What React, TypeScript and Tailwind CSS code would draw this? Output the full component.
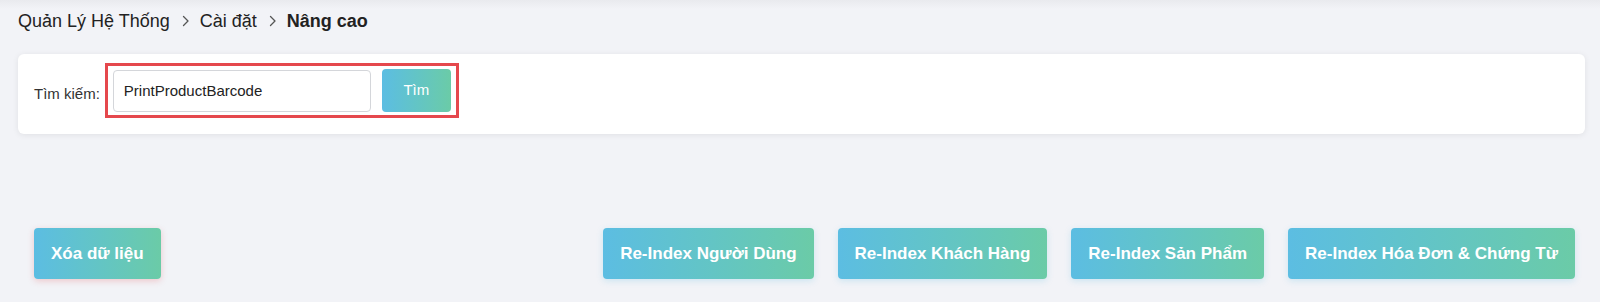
const ChevronIcon = () => (
  <svg width="8" height="12" viewBox="0 0 8 12" fill="none" className="ml-[12px] mr-[10px]">
    <path d="M1.5 1.5L6 6L1.5 10.5" stroke="#555" strokeWidth="1.3" strokeLinecap="round" strokeLinejoin="round" />
  </svg>
)

const GradientButton = ({ label, shadow }: { label: string; shadow: string }) => (
  <button
    className={`h-[51px] px-[17px] rounded-[4px] bg-gradient-to-r from-[#5cbde2] to-[#6bcba7] text-white font-bold text-[17px] ${shadow}`}
  >
    {label}
  </button>
)

export default function App() {
  return (
    <div
      className="w-[1600px] h-[302px] bg-[#f2f3f7] overflow-hidden"
      style={{ fontFamily: '"Liberation Sans", Arial, sans-serif' }}
    >
      <div className="bg-gradient-to-b from-[#e9eaee] to-[#f2f3f7] h-[9px]" />
      <div className="px-[18px]">
        {/* breadcrumb */}
        <div className="h-[24px] flex items-center text-[18px] text-[#222]">
          <span>Quản Lý Hệ Thống</span>
          <ChevronIcon />
          <span>Cài đặt</span>
          <ChevronIcon />
          <span className="font-bold">Nâng cao</span>
        </div>

        {/* search card */}
        <div className="mt-[21px] h-[80px] w-[1567px] bg-white rounded-[6px] shadow-[0_1px_6px_rgba(0,0,0,0.08)] flex items-center px-[16px]">
          <span className="text-[15px] text-[#333]">Tìm kiếm:</span>
          <div className="ml-[5px] mb-[7px] h-[55px] border-[3px] border-[#e5484d] flex items-center gap-[11px] px-[5px]">
            <input
              className="h-[42px] w-[258px] border border-[#d4d6da] rounded-[4px] px-[10px] text-[15px] text-[#222] outline-none"
              defaultValue="PrintProductBarcode"
              style={{ fontFamily: '"Liberation Sans", Arial, sans-serif' }}
            />
            <button className="h-[43px] w-[69px] rounded-[4px] bg-gradient-to-r from-[#5cbde2] to-[#6bcba7] text-white text-[15px]">
              Tìm
            </button>
          </div>
        </div>

        {/* actions */}
        <div className="mt-[94px] flex justify-between pl-[16px] pr-[7px]">
          <GradientButton label="Xóa dữ liệu" shadow="shadow-[0_2px_6px_rgba(229,72,77,0.25)]" />
          <div className="flex gap-[24px]">
            <GradientButton label="Re-Index Người Dùng" shadow="shadow-[0_2px_6px_rgba(92,189,226,0.25)]" />
            <GradientButton label="Re-Index Khách Hàng" shadow="shadow-[0_2px_6px_rgba(92,189,226,0.25)]" />
            <GradientButton label="Re-Index Sản Phẩm" shadow="shadow-[0_2px_6px_rgba(92,189,226,0.25)]" />
            <GradientButton label="Re-Index Hóa Đơn & Chứng Từ" shadow="shadow-[0_2px_6px_rgba(92,189,226,0.25)]" />
          </div>
        </div>
      </div>
    </div>
  )
}
